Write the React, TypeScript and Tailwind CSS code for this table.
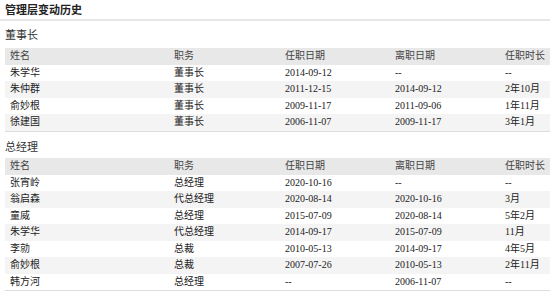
import React from "react";

type Row = [string, string, string, string, string];

const chairman: Row[] = [
  ["朱学华", "董事长", "2014-09-12", "--", "--"],
  ["朱仲群", "董事长", "2011-12-15", "2014-09-12", "2年10月"],
  ["俞妙根", "董事长", "2009-11-17", "2011-09-06", "1年11月"],
  ["徐建国", "董事长", "2006-11-07", "2009-11-17", "3年1月"],
];

const gm: Row[] = [
  ["张宵岭", "总经理", "2020-10-16", "--", "--"],
  ["翁启森", "代总经理", "2020-08-14", "2020-10-16", "3月"],
  ["童威", "总经理", "2015-07-09", "2020-08-14", "5年2月"],
  ["朱学华", "代总经理", "2014-09-17", "2015-07-09", "11月"],
  ["李勍", "总裁", "2010-05-13", "2014-09-17", "4年5月"],
  ["俞妙根", "总裁", "2007-07-26", "2010-05-13", "2年11月"],
  ["韩方河", "总经理", "--", "2006-11-07", "--"],
];

const header: Row = ["姓名", "职务", "任职日期", "离职日期", "任职时长"];

function Table({ rows }: { rows: Row[] }) {
  return (
    <div className="ml-[5px] border-b border-[#dddddd]">
      <div className="grid grid-cols-[164px_111px_110px_110px_1fr] h-[16.5px] items-center bg-[#e8e8e8] text-[#444]">
        {header.map((h, i) => (
          <div key={i} className="pl-[5px] leading-[16.5px]">
            {h}
          </div>
        ))}
      </div>
      {rows.map((r, ri) => (
        <div
          key={ri}
          className={
            "grid grid-cols-[164px_111px_110px_110px_1fr] h-[16.5px] items-center " +
            (ri % 2 === 1 ? "bg-[#f4f4f4]" : "bg-white")
          }
        >
          {r.map((c, ci) => (
            <div key={ci} className="pl-[5px] leading-[16.5px] whitespace-nowrap">
              {c}
            </div>
          ))}
        </div>
      ))}
    </div>
  );
}

export default function App() {
  return (
    <div
      className="w-[550px] h-[293px] overflow-hidden bg-white text-[#222] text-[10px]"
      style={{ fontFamily: '"Liberation Serif", "Noto Sans CJK SC", serif' }}
    >
      <div className="pt-[2px] h-[19px] pl-[5px] text-[11px] font-bold leading-[16px] text-[#222]">
        管理层变动历史
      </div>
      <div className="h-[2px] bg-[#e6e6e6]" />
      <div className="mt-[6px] h-[16px] pl-[5px] text-[11px] leading-[16px] text-[#333]">董事长</div>
      <div className="mt-[5px]">
        <Table rows={chairman} />
      </div>
      <div className="mt-[7.5px] h-[16px] pl-[5px] text-[11px] leading-[16px] text-[#333]">总经理</div>
      <div className="mt-[3px]">
        <Table rows={gm} />
      </div>
    </div>
  );
}
